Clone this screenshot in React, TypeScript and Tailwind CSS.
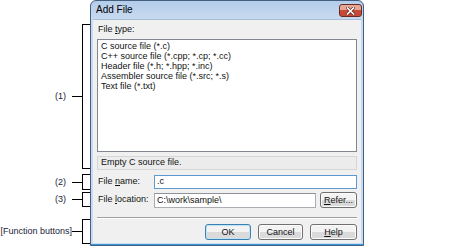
// Add File dialog with callout brackets

const fileTypes = [
  'C source file (*.c)',
  'C++ source file (*.cpp; *.cp; *.cc)',
  'Header file (*.h; *.hpp; *.inc)',
  'Assembler source file (*.src; *.s)',
  'Text file (*.txt)',
];

interface Callout {
  label: string;
  height: string;
  gap: string;
  pad: string;
}

const callouts: Callout[] = [
  { label: '(1)', height: 'h-[145px]', gap: 'mt-[24px]', pad: 'pr-[6px]' },
  { label: '(2)', height: 'h-[16px]', gap: 'mt-[5px]', pad: 'pr-[6px]' },
  { label: '(3)', height: 'h-[15px]', gap: 'mt-[2px]', pad: 'pr-[6px]' },
  { label: '[Function buttons]', height: 'h-[25px]', gap: 'mt-[12px]', pad: 'pr-0' },
];

function Btn({ children, primary = false, w = 'w-[46px]' }: { children: React.ReactNode; primary?: boolean; w?: string }) {
  return (
    <div
      className={`${w} h-[16px] rounded-[3px] border flex items-center justify-center text-[9px] leading-none text-[#111] bg-gradient-to-b from-[#f3f3f3] from-50% to-[#dadada] to-50% ${
        primary ? 'border-[#3c7fb1] shadow-[inset_0_0_0_1px_#bfe3f7]' : 'border-[#707070] shadow-[inset_0_0_0_1px_#fcfcfc]'
      }`}
    >
      {children}
    </div>
  );
}

function CloseButton() {
  return (
    <div className="w-[23px] h-[13px] rounded-[3px] border border-[#6a2c22] bg-gradient-to-b from-[#e6a796] from-45% to-[#c84a36] to-45% flex items-center justify-center">
      <svg width="9" height="8" viewBox="0 0 9 8">
        <path d="M1.5 1 L7.5 7 M7.5 1 L1.5 7" stroke="#5b2a22" strokeWidth="3" strokeLinecap="square" />
        <path d="M1.5 1 L7.5 7 M7.5 1 L1.5 7" stroke="#ffffff" strokeWidth="1.6" strokeLinecap="square" />
      </svg>
    </div>
  );
}

export default function App() {
  return (
    <div className="w-[474px] h-[248px] bg-white flex font-['Liberation_Sans',Arial,sans-serif] text-[#111]">
      {/* Callout brackets */}
      <div className="w-[90px] flex flex-col shrink-0">
        {callouts.map((c) => (
          <div key={c.label} className={`flex items-center ${c.height} ${c.gap}`}>
            <div className={`flex-1 text-right text-[9px] leading-none whitespace-nowrap text-[#1b1b3a] ${c.pad}`}>{c.label}</div>
            <div className="w-[10px] h-px bg-black" />
            <div className="w-[8px] self-stretch border-l border-y border-black" />
          </div>
        ))}
      </div>

      {/* Dialog */}
      <div className="w-[274px] h-[246px] flex flex-col rounded-t-[6px] border border-[#41607f] bg-gradient-to-b from-[#b4cdea] to-[#c9dbf0] to-[20px] shadow-[inset_0_-1px_0_#3b9ad6]">
        <div className="h-[18px] flex items-start shrink-0">
          <div className="pl-[5px] pt-[3px] text-[10px] leading-[12px] text-black">Add File</div>
          <div className="ml-auto mr-[1px] pt-[3px]">
            <CloseButton />
          </div>
        </div>

        <div className="mx-[2px] mb-[2px] h-[224px] bg-[#f0f0f0] border-t border-[#a9bdd4] px-[4px] flex flex-col text-[9px]">
          <div className="mt-[4px] h-[11px] leading-[11px] pl-[1px]">
            File <span className="underline">t</span>ype:
          </div>
          <div className="mt-[4px] h-[113px] bg-white border border-[#828790] pl-[3px] leading-[10px] pt-[1px]">
            {fileTypes.map((t) => (
              <div key={t} className="whitespace-nowrap">{t}</div>
            ))}
          </div>
          <div className="mt-[4px] h-[14px] border border-[#d6d6d6] bg-[#ececec] pl-[3px] flex items-center">
            Empty C source file.
          </div>
          <div className="mt-[5px] h-[14px] flex items-center">
            <div className="w-[57px] pl-[1px]">
              File <span className="underline">n</span>ame:
            </div>
            <div className="flex-1 h-full bg-white border border-[#5b9bd1] pl-[2px] flex items-center">.c</div>
          </div>
          <div className="mt-[3px] h-[16px] flex items-center">
            <div className="w-[57px] pl-[1px]">
              File <span className="underline">l</span>ocation:
            </div>
            <div className="w-[162px] h-[15px] self-end bg-white border border-[#abadb3] border-t-[#8e9299] pl-[2px] flex items-center">
              C:\work\sample\
            </div>
            <div className="ml-auto">
              <Btn w="w-[37px]">
                <span className="underline">R</span>efer...
              </Btn>
            </div>
          </div>
          <div className="mt-[9px] h-[2px] border-t border-[#a0a0a0] border-b border-b-white" />
          <div className="mt-[5px] flex justify-end gap-[7px]">
            <Btn primary>OK</Btn>
            <Btn w="w-[45px]">Cancel</Btn>
            <Btn w="w-[47px]">
              <span className="underline">H</span>elp
            </Btn>
          </div>
        </div>
      </div>
    </div>
  );
}
